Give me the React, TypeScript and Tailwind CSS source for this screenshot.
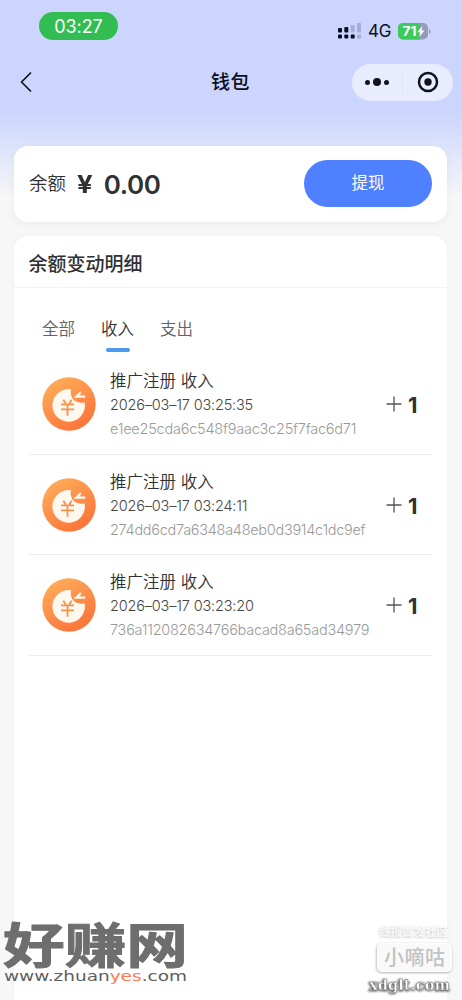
const tabs = ["全部", "收入", "支出"];

const records = [
  { title: "推广注册 收入", time: "2026–03–17 03:25:35", id: "e1ee25cda6c548f9aac3c25f7fac6d71", spacing: "tracking-[-0.23px]" },
  { title: "推广注册 收入", time: "2026–03–17 03:24:11", id: "274dd6cd7a6348a48eb0d3914c1dc9ef", spacing: "tracking-[-0.29px]" },
  { title: "推广注册 收入", time: "2026–03–17 03:23:20", id: "736a112082634766bacad8a65ad34979", spacing: "tracking-[-0.26px]" },
];

function Signal() {
  return (
    <svg width="24" height="18" viewBox="0 0 24 18" className="mr-1.5">
      <g fill="#0b0e1c">
        <rect x="0" y="6" width="4" height="4.5" rx="1" />
        <rect x="6.3" y="5" width="4" height="5.5" rx="1" />
        <rect x="0" y="12.5" width="4" height="4" rx="1" />
        <rect x="6.3" y="12.5" width="4" height="4" rx="1" />
        <rect x="12.7" y="12.5" width="4" height="4" rx="1" />
      </g>
      <g fill="#a5afd6">
        <rect x="12.7" y="3" width="4" height="7.5" rx="1" />
        <rect x="19" y="1" width="4" height="9.5" rx="1" />
        <rect x="19" y="12.5" width="4" height="4" rx="1" />
      </g>
    </svg>
  );
}

function Battery() {
  return (
    <svg width="34" height="17" viewBox="0 0 34 17">
      <rect width="30" height="16.5" rx="5" fill="#959bb5" />
      <path d="M5 0h17v16.5H5a5 5 0 0 1-5-5V5a5 5 0 0 1 5-5z" fill="#3bca5b" />
      <path d="M31 6c2 .7 2 4.300 0 5z" fill="#959bb5" />
      <text x="4.500" y="12.800" fontSize="12.500" fontWeight="700" fill="#fff" textLength="14" lengthAdjust="spacingAndGlyphs">71</text>
      <path d="M24.500 3l-5.300 6.300h3l-1 4.700 5.300-6.500h-3z" fill="#fff" />
    </svg>
  );
}

function StatusBar() {
  return (
    <div className="flex h-[52px] items-start pt-3 pl-[39px]">
      <div className="flex h-7 w-[79px] items-center justify-center rounded-full bg-[#32bd53] text-[18px] tracking-[-0.1px] text-white">
        03:27
      </div>
      <div className="ml-[220px] flex h-[38px] items-center">
        <Signal />
        <span className="w-[30px] pt-0.5 text-[17px] tracking-[-0.3px]">4G</span>
        <Battery />
      </div>
    </div>
  );
}

function NavBar() {
  return (
    <div className="flex h-[60px] items-center">
      <svg width="12" height="20" viewBox="0 0 12 20" className="ml-5" fill="none" stroke="#10121b" strokeWidth="1.700" strokeLinecap="round">
        <path d="M10.500 1L1.500 10l9 9" strokeLinejoin="round" />
      </svg>
      <h1 className="ml-[179px] w-[141px] pt-0.5 text-[19px] font-medium tracking-[0.4px]">钱包</h1>
      <div className="flex h-[37px] w-[101px] items-center rounded-full bg-[#e9ecff]">
        <div className="flex w-[51px] items-center justify-center gap-[3px] border-r border-[#e1e4f7] py-2">
          <i className="h-[5px] w-[5px] rounded-full bg-[#10121b]" />
          <i className="h-2 w-2 rounded-full bg-[#10121b]" />
          <i className="h-[5px] w-[5px] rounded-full bg-[#10121b]" />
        </div>
        <div className="flex flex-1 justify-center">
          <svg width="22" height="22" viewBox="0 0 22 22">
            <circle cx="11" cy="11" r="9" fill="none" stroke="#10121b" strokeWidth="2.500" />
            <circle cx="11" cy="11" r="3.700" fill="#10121b" />
          </svg>
        </div>
      </div>
    </div>
  );
}

function CoinIcon() {
  return (
    <svg width="54" height="54" viewBox="0 0 54 54" className="shrink-0">
      <defs>
        <linearGradient id="coin" x1="0.2" y1="0" x2="0.8" y2="1">
          <stop offset="0" stopColor="#ffad59" />
          <stop offset="1" stopColor="#fb7038" />
        </linearGradient>
      </defs>
      <circle cx="27" cy="27" r="26.700" fill="url(#coin)" />
      <path d="M29 12.300A16.300 16.300 0 1 0 42.600 25.200Q36.500 27 32 23.300Q27.500 18.500 29 12.300z" fill="#fff8ef" />
      <path d="M38.300 14.500L32 20.500H43V18.700H36.800L38.900 16.500z" fill="#fff8ef" stroke="#fff8ef" strokeWidth="0.500" strokeLinejoin="round" />
      <path d="M21.300 22.800l2.500 3.800M29.700 22.800l-2.500 3.800M19 27.300h13M19 32.300h13M25.500 27.300v11.500" fill="none" stroke="#fa9148" strokeWidth="1.800" />
    </svg>
  );
}

function BalanceCard() {
  return (
    <section className="flex h-[76px] items-center rounded-[14px] bg-white px-[15px] shadow-[0_2px_8px_rgba(0,0,0,0.05)]">
      <span className="text-[18.500px] font-[350]">余额</span>
      <span className="ml-[11px] origin-left scale-x-115 pt-px text-[24px] font-bold">¥</span>
      <span className="ml-[13px] text-[26px] font-semibold tracking-[-0.35px]">0.00</span>
      <button className="mb-px ml-auto h-[47px] w-32 rounded-full bg-[#4f80ff] pb-px text-[16.500px] text-white">提现</button>
    </section>
  );
}

function RecordRow({ title, time, id, spacing }: (typeof records)[number]) {
  return (
    <li className="flex h-[100.700px] items-center border-b border-[#eeeeee] pl-[13px]">
      <CoinIcon />
      <div className="ml-3.5 w-[276px] pt-px whitespace-nowrap">
        <div className="h-[25px] text-[16.500px] leading-[26px] font-[350]">{title}</div>
        <div className="h-6 text-[14.500px] leading-6 font-light tracking-[-0.18px] text-[#444]">{time}</div>
        <div className={`h-6 text-[14.500px] leading-6 font-light text-[#999] ${spacing}`}>{id}</div>
      </div>
      <svg width="16" height="16" viewBox="0 0 16 16" className="shrink-0">
        <path d="M8 .5v15M.5 8h15" stroke="#555" strokeWidth="1.300" />
      </svg>
      <span className="ml-1.5 pt-[3px] text-[22px] font-bold">1</span>
    </li>
  );
}

function DetailCard() {
  return (
    <section className="mt-3.5 h-[764px] rounded-t-[14px] bg-white shadow-[0_0_6px_rgba(0,0,0,0.03)]">
      <h2 className="h-[52px] border-b border-[#f2f2f2] pl-[14.500px] text-[19px] leading-[57px] font-medium">余额变动明细</h2>
      <nav className="flex h-[66px] gap-[26px] pt-7 pl-[28px] text-[16.500px] font-[350]">
        {tabs.map((tab) => (
          <div key={tab} className={`flex flex-col items-center ${tab === "收入" ? "text-[#303133]" : "text-[#606266]"}`}>
            <span className="leading-[27px]">{tab}</span>
            {tab === "收入" && <i className="mt-[5px] h-1 w-6 rounded-full bg-[#4a9bee]" />}
          </div>
        ))}
      </nav>
      <ul className="mx-[15px]">
        {records.map((record) => (
          <RecordRow key={record.id} {...record} />
        ))}
      </ul>
    </section>
  );
}

function Watermarks() {
  return (
    <>
      <svg width="196" height="100" viewBox="0 -28 196 100" className="absolute bottom-[10px] left-0">
        <text x="3" y="45" fontSize="48" fontWeight="700" fill="#6e6e6e" stroke="#6e6e6e" strokeWidth="1" strokeLinejoin="round" textLength="185" lengthAdjust="spacingAndGlyphs">好赚网</text>
        <text x="4" y="63" fontSize="14" fontFamily="DejaVu Sans" fill="#5e5e5e" textLength="183" lengthAdjust="spacingAndGlyphs">
          www.zhuan<tspan fill="#ff7a50">yes</tspan>.com
        </text>
      </svg>
      <svg width="96" height="78" viewBox="0 0 96 78" className="absolute right-0 bottom-0">
        <defs>
          <filter id="lift" x="-20%" y="-20%" width="140%" height="150%">
            <feDropShadow dx="-0.500" dy="0.800" stdDeviation="0.900" floodColor="#777" floodOpacity="0.7" />
          </filter>
          <filter id="url-lift" x="-20%" y="-20%" width="140%" height="150%">
            <feDropShadow dx="-0.500" dy="0.800" stdDeviation="1" floodColor="#222" floodOpacity="1" />
          </filter>
        </defs>
        <g filter="url(#lift)" fill="#fff">
          <text x="13" y="14" fontSize="11.500" fontWeight="700" textLength="69" opacity="0.7">线报首发社区</text>
          <rect x="11" y="21" width="75" height="29" rx="5" opacity="0.9" />
        </g>
        <text x="3" y="68" fontSize="14.500" fontWeight="700" fontFamily="DejaVu Serif" fill="#fff" stroke="#666" strokeWidth="0.400" filter="url(#url-lift)" textLength="81" lengthAdjust="spacingAndGlyphs">xdglt.com</text>
        <text x="18" y="43" fontSize="20" fontWeight="500" fill="#c2c2c2" textLength="61">小嘀咕</text>
      </svg>
    </>
  );
}

export default function App() {
  return (
    <main className="relative h-[1000px] w-[462px] overflow-hidden bg-[#f7f7f7] bg-[linear-gradient(180deg,#cbd5fe_0px,#cbd5fe_112px,#f7f7f7_198px)] font-['Inter','Noto_Sans_CJK_SC',sans-serif] text-[#303133]">
      <header className="text-[#0b0e1c]">
        <StatusBar />
        <NavBar />
      </header>
      <div className="mt-[34px] mr-[15px] ml-3.5">
        <BalanceCard />
        <DetailCard />
      </div>
      <Watermarks />
    </main>
  );
}
